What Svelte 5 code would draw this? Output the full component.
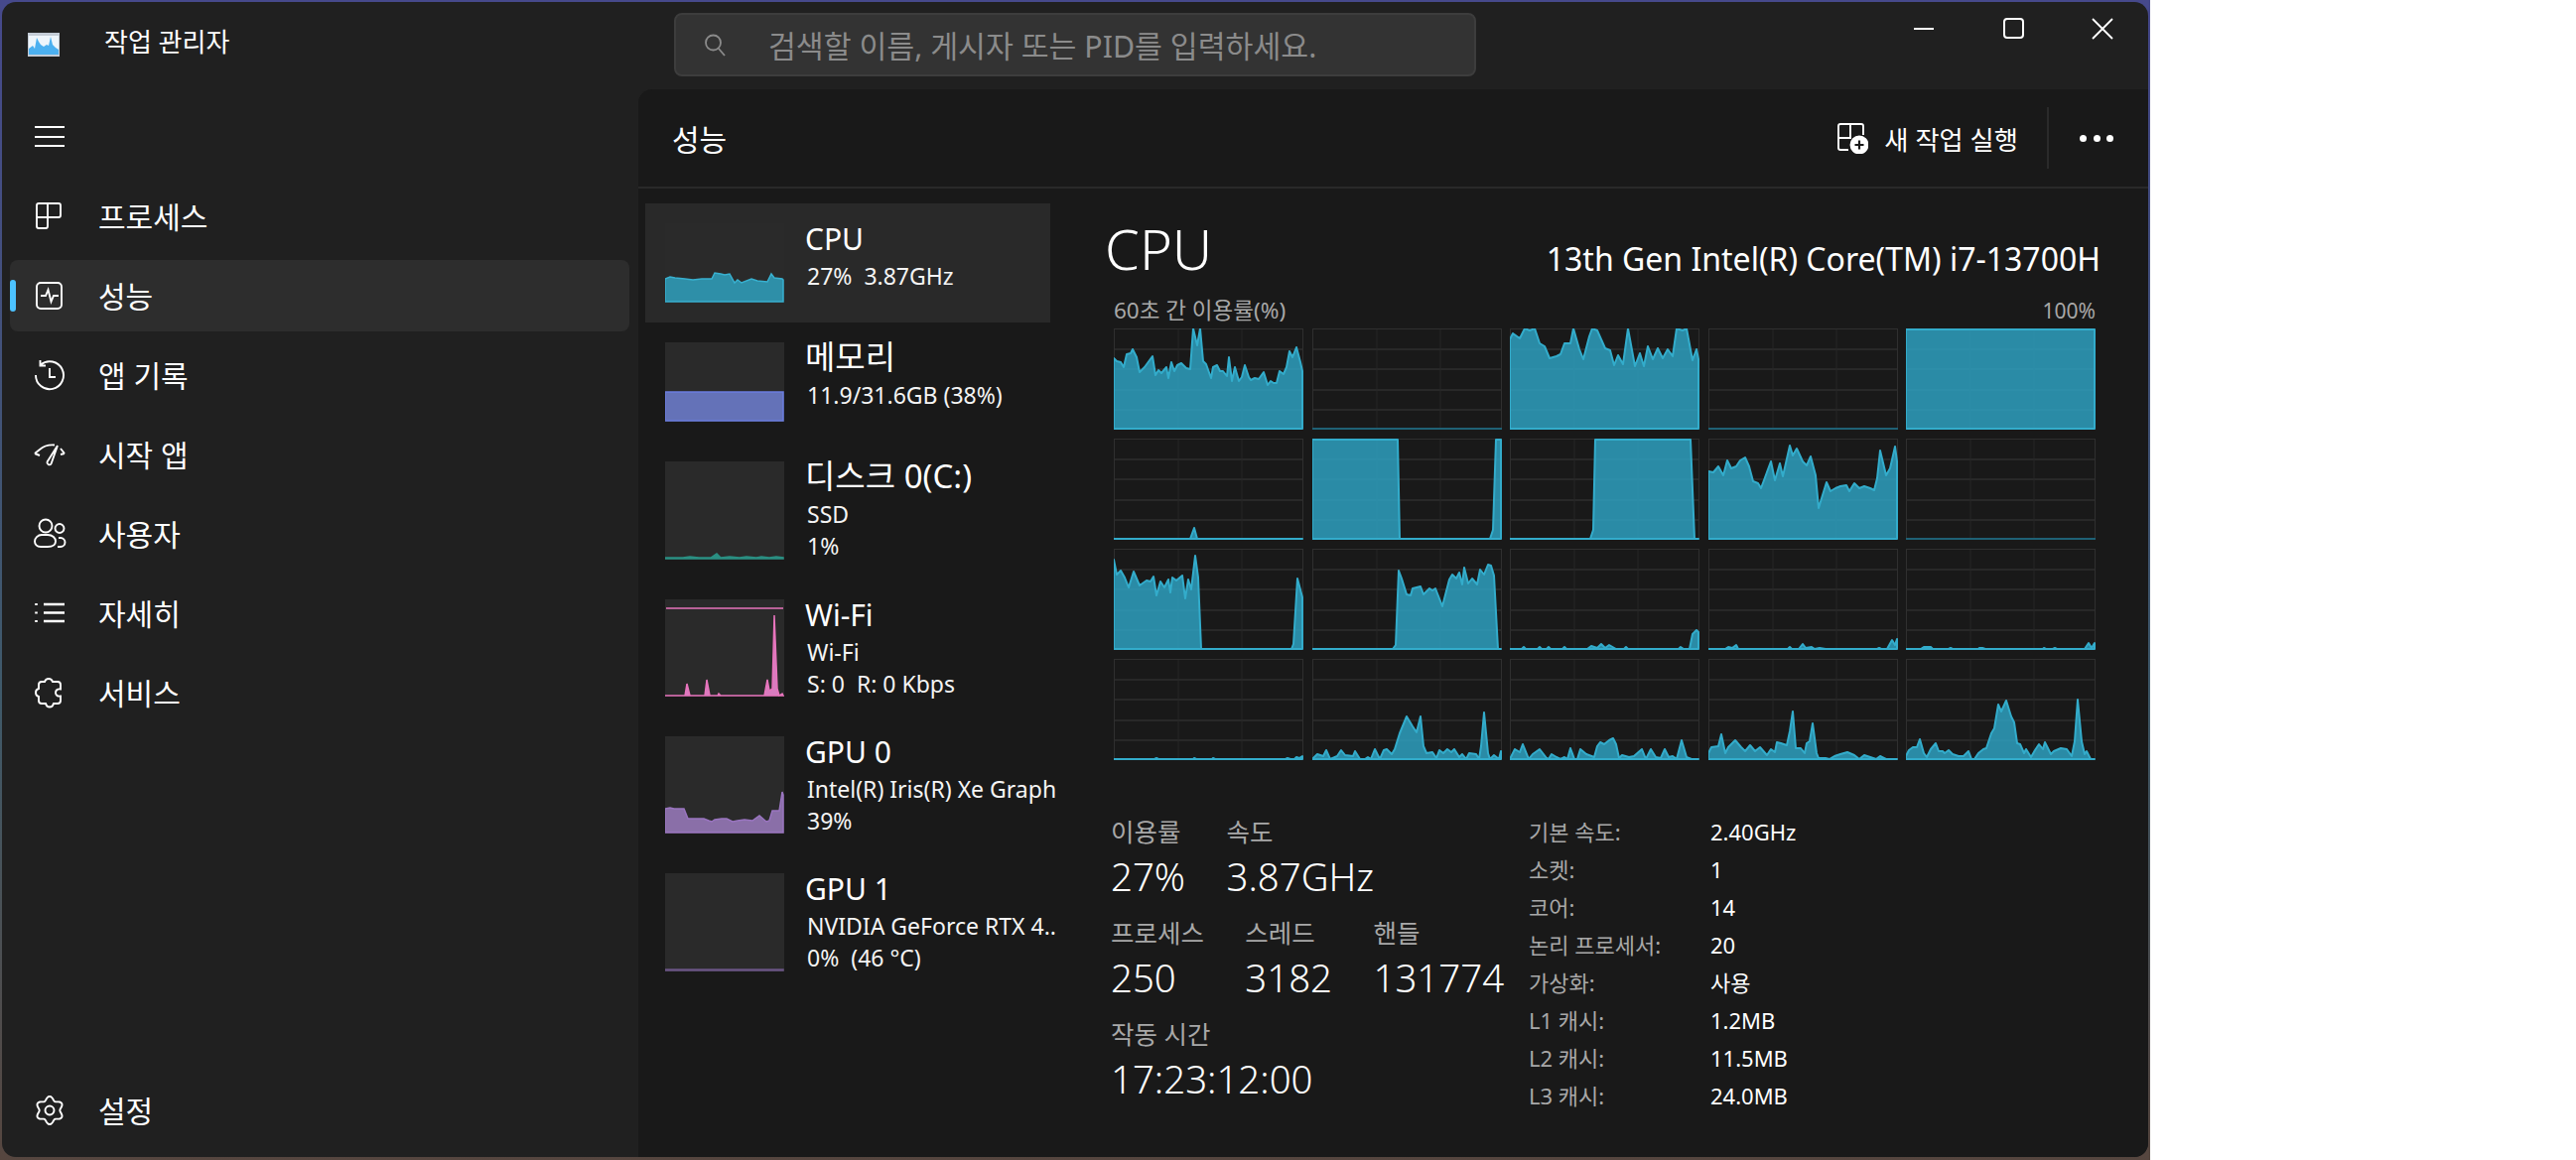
<script>
	const W = 190;
	const B = 101;

	// points are chart pixels, traced from the graph
	const cores = [
		'0,30 3,33 7,34 10,39 13,26 17,25 19,21 23,29 26,44 31,39 39,28 42,47 45,42 48,45 53,39 55,50 58,34 61,43 64,37 68,35 73,40 77,41 80,0 84,17 87,0 90,33 93,36 98,50 100,39 104,37 107,43 110,43 114,48 116,29 119,53 122,39 126,53 129,49 132,37 136,49 138,52 142,50 146,51 151,44 155,57 158,53 161,55 164,55 167,43 171,46 174,39 177,23 180,29 184,19 188,34 190,43',
		'',
		'0,11 3,5 10,10 15,0 20,2 25,0 30,15 35,18 40,30 47,28 51,26 55,15 61,15 64,0 70,21 74,31 80,8 83,0 88,2 96,20 101,22 105,37 109,27 114,36 119,0 126,38 131,25 135,38 139,18 144,31 149,20 154,30 159,21 164,28 168,0 174,2 178,0 184,32 188,21 190,31',
		'',
		'0,1 190,1',
		'0,101 77,101 81,90 84,101 190,101',
		'0,1 86,1 88,101 179,101 182,92 185,1 190,1',
		'0,101 81,101 84,92 86,1 182,1 186,101 190,101',
		'0,33 5,34 10,28 15,37 19,22 23,30 28,28 32,22 37,19 41,28 45,43 50,45 53,50 63,23 67,42 72,25 75,38 82,7 85,17 89,10 95,23 99,27 103,18 108,37 111,70 115,57 119,44 123,53 128,50 133,48 139,47 142,53 147,45 152,50 157,48 163,50 167,52 170,40 173,12 179,37 183,30 188,8 190,23',
		'',
		'0,11 3,26 7,22 11,29 15,39 20,23 26,37 33,32 37,33 40,28 43,47 47,33 51,39 55,31 57,44 59,29 63,32 69,27 72,50 75,31 78,41 82,7 85,29 88,101 179,101 181,96 185,30 190,49',
		'0,101 81,101 84,97 87,22 90,30 95,46 99,47 101,40 109,38 112,46 118,40 121,42 124,40 131,58 138,31 141,26 145,30 148,24 151,36 153,19 157,35 161,30 166,36 169,21 173,26 177,16 180,17 183,27 187,101 190,101',
		'0,101 12,101 14,99 16,101 28,101 30,99 32,101 37,101 39,99 41,101 53,101 55,99 57,101 78,101 82,98 88,100 92,96 96,100 100,97 107,101 115,101 117,99 119,101 170,101 172,99 175,101 181,101 184,86 188,82 190,84',
		'0,101 17,101 20,99 24,100 28,97 30,101 80,101 82,99 84,101 91,101 95,96 98,100 104,99 107,101 112,100 118,101 170,101 172,100 174,101 180,101 185,92 188,97 190,91',
		'0,101 15,101 18,99 25,99 27,101 43,101 45,100 47,101 73,101 74,100 77,100 80,101 138,101 139,100 141,101 148,101 150,100 152,101 180,101 184,95 187,100 190,95',
		'0,101 41,101 43,100 45,101 80,101 81,100 83,101 99,101 100,100 102,101 173,101 175,100 178,101 182,101 184,99 187,100 190,98',
		'0,101 5,96 11,98 14,92 18,101 25,98 29,92 33,97 41,98 43,93 48,101 53,101 56,99 59,101 63,91 68,101 72,92 75,91 80,96 83,91 88,75 95,58 101,68 105,74 109,58 112,88 115,95 121,94 125,100 128,92 132,95 136,91 140,94 143,91 148,99 151,96 155,101 158,95 165,96 168,101 170,88 173,54 177,95 179,101 183,97 188,101 190,93',
		'0,101 5,91 10,94 13,86 19,101 23,96 30,91 37,100 39,101 42,96 47,99 51,101 55,99 58,101 61,90 65,101 68,101 71,91 77,96 85,99 88,88 91,84 95,86 100,82 104,80 107,86 110,100 113,97 120,99 125,98 133,91 137,101 142,91 147,99 152,100 156,91 160,99 164,98 168,101 173,82 178,99 183,101 190,101',
		'0,95 3,89 10,88 13,76 17,95 20,89 27,82 33,89 37,93 42,87 47,93 52,89 59,97 63,91 67,94 69,84 73,85 79,87 82,73 85,53 88,90 93,90 97,95 99,85 102,83 105,65 109,95 111,100 118,100 122,101 127,98 133,96 140,94 147,97 152,101 157,97 163,99 169,101 173,98 179,101 190,101',
		'0,98 3,92 7,89 11,89 14,81 18,95 21,99 25,91 30,85 33,93 37,93 39,95 43,92 47,96 53,98 58,98 63,93 66,101 69,101 73,95 78,91 81,90 86,75 89,70 93,46 96,53 101,42 106,58 109,64 112,85 115,86 119,95 121,91 126,99 130,92 134,86 138,91 140,84 146,96 149,93 156,90 162,91 167,98 170,83 173,41 177,83 180,96 182,93 186,101 190,101'
	];

	const resources = [
		{ name: 'CPU', lines: ['27%  3.87GHz'], h: 80, cls: 'cpu', active: true,
			pts: '0,56 5,54 10,55 20,56 28,57 37,56 47,56 50,50 56,51 60,52 65,51 70,60 73,57 77,60 87,56 93,58 103,59 107,51 110,55 118,56 119,57' },
		{ name: '메모리', kr: true, lines: ['11.9/31.6GB (38%)'], h: 80, cls: 'mem', pts: '0,50 119,50' },
		{ name: '디스크 0(C:)', kr: true, lines: ['SSD', '1%'], h: 99, cls: 'disk',
			pts: '0,97 18,97 25,96 34,97 46,97 52,93 56,97 65,96 75,97 82,96 92,97 97,96 105,97 112,96 119,97' },
		{ name: 'Wi-Fi', lines: ['Wi-Fi', 'S: 0  R: 0 Kbps'], h: 98, cls: 'net', top: 9,
			pts: '0,97 20,97 22,85 25,97 40,97 42,81 45,97 53,97 54,95 56,97 100,97 103,81 105,92 108,90 110,16 113,90 115,97 118,95 119,97' },
		{ name: 'GPU 0', lines: ['Intel(R) Iris(R) Xe Graph', '39%'], h: 98, cls: 'gpu',
			pts: '0,73 5,72 9,73 19,73 23,83 39,83 44,85 47,86 50,84 57,83 62,83 68,86 73,85 80,84 88,85 95,80 102,86 105,85 108,75 115,75 118,56 119,59' },
		{ name: 'GPU 1', lines: ['NVIDIA GeForce RTX 4..', '0%  (46 °C)'], h: 99, cls: 'gpu idle', pts: '0,97 119,97' }
	];

	const specs = [
		['기본 속도:', '2.40GHz'], ['소켓:', '1'], ['코어:', '14'], ['논리 프로세서:', '20'],
		['가상화:', '사용'], ['L1 캐시:', '1.2MB'], ['L2 캐시:', '11.5MB'], ['L3 캐시:', '24.0MB']
	];

	function gearPath() {
		let d = '';
		for (let i = 0; i <= 72; i++) {
			const a = (i / 72) * Math.PI * 2;
			const r = 12.2 + 1.9 * Math.cos(6 * a);
			d += (i ? 'L' : 'M') + (16 + r * Math.sin(a)).toFixed(2) + ' ' + (16 - r * Math.cos(a)).toFixed(2);
		}
		return d + 'Z M16 11.5a4.5 4.5 0 1 0 0 9 4.5 4.5 0 1 0 0-9z';
	}

	const nav = [
		{ label: '프로세스', d: 'M14 3H5a2 2 0 0 0-2 2v21a2 2 0 0 0 2 2h7a2 2 0 0 0 2-2V3h11a2 2 0 0 1 2 2v10a2 2 0 0 1-2 2H3' },
		{ label: '성능', active: true, d: 'M7 3h17a4 4 0 0 1 4 4v18a4 4 0 0 1-4 4H7a4 4 0 0 1-4-4V7a4 4 0 0 1 4-4z M7 16h5l2.5-6 3 12 2.5-6h5' },
		{ label: '앱 기록', d: 'M7 5.5A14 14 0 1 1 2 16 M6.5 1v5.5H12 M16 9v9h6' },
		{ label: '시작 앱', d: 'M1 15l5-4 M1 15l5 2 M6 11C10 7.500 15 6 21 6.500 M13.500 23.500L24 7 M17.500 25.500L24 7 M13.500 23.500a2.300 2.300 0 0 0 4 2 M27 10l4 5 M31 15l-4 1' },
		{ label: '사용자', d: 'M12 1.500a6.500 6.500 0 1 0 0 13 6.500 6.500 0 1 0 0-13z M8 17h6c5 0 8 3 8 6.500S19 29 14 29H7c-4 0-6-2.500-6-5.500S4 17 8 17z M26 6a4.500 4.500 0 1 0 0 9 4.500 4.500 0 1 0 0-9z M25 20h2a4 4 0 0 1 0 9h-3' },
		{ label: '자세히', d: 'M10 7h21 M10 15.500h21 M10 24h21 M2.500 6v2 M2.500 14.500v2 M2.500 23v2', dots: true },
		{ label: '서비스', d: 'M15 2c2 0 3.500 1.500 4 3h5c2 0 3 1.500 3 3v4.500c-3-.5-5 1-5 3.500s2 4 5 3.500V24c0 1.500-1 3-3 3h-4c-.5 2-2 3.500-4 3.500s-3.500-1.500-4-3.500H8c-2 0-3-1.500-3-3v-4c-2-.5-3-2-3-4s1-3.500 3-4V8c0-1.500 1-3 3-3h3c.5-1.500 2-3 4-3z' }
	];
</script>

<style>
	:global(body) {
		background: #fff;
	}

	.desk {
		width: 2166px;
		height: 1169px;
		box-sizing: border-box;
		padding: 2px 2px 3px 2px;
		overflow: hidden;
		background: linear-gradient(180deg, #46498c 0%, #3f5a6a 60%, #56463f 100%);
		font-family: "Noto Sans", "Noto Sans CJK KR", sans-serif;
		color: #fff;
	}

	.win {
		height: 100%;
		background: #202020;
		border-radius: 14px;
		display: flex;
		flex-direction: column;
		overflow: hidden;
	}

	.titlebar {
		height: 88px;
		flex: none;
		display: flex;
		align-items: flex-start;
	}

	.app-icon {
		margin: 31px 0 0 26px;
		width: 32px;
		height: 24px;
	}

	.app-title {
		margin: 20px 0 0 45px;
		font-size: 26px;
		line-height: 40px;
		width: 130px;
		white-space: nowrap;
	}

	.search {
		margin: 11px 0 0 444px;
		width: 808px;
		height: 64px;
		box-sizing: border-box;
		background: #333;
		border: 2px solid #3d3d3d;
		border-radius: 8px;
		display: flex;
		align-items: center;
		padding-left: 27px;
		gap: 42px;
		color: #8b8b8b;
		font-size: 30.300px;
		white-space: nowrap;
	}

	.caption {
		margin-left: auto;
		margin-right: 35px;
		display: flex;
		gap: 68px;
		padding-top: 16px;
	}

	.caption svg {
		display: block;
	}

	.body {
		flex: 1;
		display: flex;
		min-height: 0;
	}

	.side {
		width: 641px;
		flex: none;
		box-sizing: border-box;
		padding: 12px 9px 11px 8px;
		display: flex;
		flex-direction: column;
		gap: 8px;
	}

	.nav-item {
		position: relative;
		height: 72px;
		flex: none;
		display: flex;
		align-items: center;
		padding-left: 24px;
		gap: 33px;
		border-radius: 8px;
		font-size: 30px;
		white-space: nowrap;
	}

	.nav-item span {
		padding-bottom: 3px;
	}

	.nav-item.active {
		background: #2d2d2d;
	}

	.nav-item.active::before {
		content: "";
		position: absolute;
		left: 0;
		top: 20px;
		width: 6px;
		height: 32px;
		border-radius: 3px;
		background: #4cc2ff;
	}

	.bottom {
		margin-top: auto;
	}

	.icon {
		width: 32px;
		height: 32px;
		flex: none;
		fill: none;
		stroke: #fff;
		stroke-width: 1.9;
		overflow: visible;
	}

	.panel {
		flex: 1;
		min-width: 0;
		background: #191919;
		border-top-left-radius: 14px;
		display: flex;
		flex-direction: column;
	}

	.panel-head {
		height: 100px;
		flex: none;
		box-sizing: border-box;
		border-bottom: 2px solid #292929;
		display: flex;
		align-items: center;
		padding: 0 35px 0 34px;
		font-size: 30px;
	}

	.run {
		margin-left: auto;
		display: flex;
		align-items: center;
		gap: 16px;
		font-size: 26.300px;
		white-space: nowrap;
	}

	.sep {
		width: 2px;
		height: 62px;
		background: #2a2a2a;
		margin: 0 31px 0 29px;
	}

	.more {
		display: flex;
		gap: 6.500px;
	}

	.more i {
		width: 7px;
		height: 7px;
		border-radius: 50%;
		background: #fff;
	}

	.page {
		flex: 1;
		display: flex;
		min-height: 0;
	}

	.list {
		width: 408px;
		flex: none;
		margin-left: 7px;
		padding-top: 15px;
	}

	.res {
		display: flex;
		padding: 20px;
		gap: 21px;
	}

	.res.active {
		background: #292929;
		height: 80px;
	}

	.thumb {
		width: 120px;
		flex: none;
		display: block;
		background: #2a2a2a;
	}

	.res-text {
		flex: 1;
		min-width: 0;
		margin-right: -26px;
		margin-bottom: -6px;
	}

	.res-name {
		font-size: 30px;
		line-height: 30px;
		padding-top: 1px;
		margin-bottom: 5.500px;
		white-space: nowrap;
	}

	.res-name.kr {
		font-size: 33px;
		padding-top: 0;
		margin-bottom: 6.500px;
	}

	.res-line {
		font-size: 23px;
		line-height: 32px;
		padding-left: 2px;
		color: #f4f4f4;
		white-space: pre;
		overflow: hidden;
	}

	.cpu { fill: #2e8fa8; stroke: #38b0cf; }
	.mem { fill: #6472b8; stroke: #6b7de0; }
	.disk { fill: #2a8f82; stroke: #2a8f82; }
	.net { fill: #d97cbf; stroke: #e874bd; }
	.gpu { fill: #8a6fa8; stroke: #9a75c0; }
	.gpu.idle { stroke: #6a5585; }

	.detail {
		margin-left: 64px;
		width: 989px;
		flex: none;
	}

	.detail-head {
		display: flex;
		justify-content: space-between;
		align-items: flex-end;
		height: 89px;
		margin-left: -9px;
		margin-right: -5px;
	}

	.big {
		font-size: 56px;
		font-weight: 300;
		line-height: 76px;
		margin-bottom: -9px;
	}

	.model {
		font-size: 32px;
		line-height: 44px;
		margin-bottom: -4px;
		white-space: nowrap;
	}

	.axis {
		display: flex;
		justify-content: space-between;
		align-items: center;
		font-size: 21px;
		line-height: 32px;
		height: 49px;
		padding-top: 13px;
		box-sizing: border-box;
		color: #a8a8a8;
		margin-top: 3px;
	}

	.axis span:first-child {
		font-size: 22.500px;
	}

	.grid {
		display: grid;
		grid-template-columns: repeat(5, 191px);
		grid-auto-rows: 102px;
		column-gap: 8.5px;
		row-gap: 9px;
	}

	.core {
		display: block;
		width: 191px;
		height: 102px;
	}

	.core .box {
		fill: none;
		stroke: #2f2f2f;
		stroke-width: 1;
	}

	.core .hl {
		stroke: #2e2e2e;
		stroke-width: 1.5;
	}

	.core .vl {
		stroke: #272727;
		stroke-width: 1;
	}

	.core .area {
		fill: rgba(46, 160, 191, 0.85);
		stroke: #33accb;
		stroke-width: 2;
		stroke-linejoin: round;
	}

	.core .flat {
		stroke: #1f6175;
		stroke-width: 2;
	}

	.stats {
		display: flex;
		padding-top: 55px;
		margin-left: -2px;
	}

	.stats-left {
		width: 420px;
		flex: none;
		display: flex;
		flex-direction: column;
		gap: 12px;
		margin-left: -1px;
	}

	.stat-row {
		display: flex;
		gap: 41.500px;
		height: 90px;
	}

	.stat-label {
		font-size: 25.500px;
		line-height: 34px;
		color: #a8a8a8;
		white-space: nowrap;
	}

	.stat-value {
		font-size: 38.400px;
		line-height: 56px;
		font-weight: 300;
		white-space: nowrap;
	}

	.specs {
		display: grid;
		grid-template-columns: 183px auto;
		grid-auto-rows: 38px;
		font-size: 22px;
		line-height: 38px;
		white-space: nowrap;
		margin: -2px 0 0 1px;
	}

	.specs .k {
		color: #a8a8a8;
	}
</style>

<div class="desk">
	<div class="win">
		<div class="titlebar">
			<svg class="app-icon" viewBox="0 0 32 24">
				<rect width="32" height="24" fill="#c4ccd6" />
				<rect x="1" y="3" width="30" height="19" fill="#eef5fb" />
				<path d="M1 22V16L5 13 7 16 9 5 11 9 13 12 16 14 19 12 21 13 23 4 25 12 28 15 31 17V22Z" fill="#4cb0f0" />
			</svg>
			<div class="app-title">작업 관리자</div>
			<div class="search">
				<svg width="24" height="24" viewBox="0 0 24 24" fill="none" stroke="#8b8b8b" stroke-width="1.800">
					<circle cx="10.500" cy="10" r="7.500" />
					<path d="M16 16l6 7" />
				</svg>
				<span>검색할 이름, 게시자 또는 PID를 입력하세요.</span>
			</div>
			<div class="caption">
				<svg width="22" height="22" viewBox="0 0 22 22" stroke="#fff" stroke-width="2" fill="none"><path d="M1 11h20" /></svg>
				<svg width="22" height="22" viewBox="0 0 22 22" stroke="#fff" stroke-width="2" fill="none"><rect x="2" y="1" width="19" height="19" rx="3" /></svg>
				<svg width="22" height="22" viewBox="0 0 22 22" stroke="#fff" stroke-width="1.800" fill="none"><path d="M1 1l20 20M21 1L1 21" /></svg>
			</div>
		</div>

		<div class="body">
			<div class="side">
				<div class="nav-item">
					<svg class="icon" viewBox="0 0 32 32"><path d="M1 6h30M1 16h30M1 25h30" /></svg>
				</div>
				{#each nav as item}
					<div class="nav-item" class:active={item.active}>
						<svg class="icon" viewBox="0 0 32 32"><path d={item.d} stroke-width={item.dots ? 2.600 : undefined} /></svg>
						<span>{item.label}</span>
					</div>
				{/each}
				<div class="nav-item bottom">
					<svg class="icon" viewBox="0 0 32 32"><path d={gearPath()} /></svg>
					<span>설정</span>
				</div>
			</div>

			<div class="panel">
				<div class="panel-head">
					<span>성능</span>
					<div class="run">
						<svg width="32" height="32" viewBox="0 0 32 32" fill="none" stroke="#fff" stroke-width="1.900">
							<path d="M14 2H4a2 2 0 0 0-2 2v22a2 2 0 0 0 2 2h8M14 2v14H2M14 2h11a2 2 0 0 1 2 2v9" />
							<circle cx="23" cy="23" r="8.500" fill="#fff" />
							<path d="M23 18.500v9M18.500 23h9" stroke="#191919" stroke-width="2.200" />
						</svg>
						<span>새 작업 실행</span>
					</div>
					<div class="sep"></div>
					<div class="more"><i></i><i></i><i></i></div>
				</div>

				<div class="page">
					<div class="list">
						{#each resources as r}
							<div class="res" class:active={r.active}>
								<svg class="thumb" style="height: {r.h}px" viewBox="0 0 120 {r.h}">
									{#if r.top}
										<path d="M1 {r.top}H119" class={r.cls} stroke-width="1.500" fill="none" />
									{/if}
									<polygon class={r.cls} stroke-width="1.500" points="0,{r.h - 1} {r.pts} 119,{r.h - 1}" />
								</svg>
								<div class="res-text">
									<div class="res-name" class:kr={r.kr}>{r.name}</div>
									{#each r.lines as line}
										<div class="res-line">{line}</div>
									{/each}
								</div>
							</div>
						{/each}
					</div>

					<div class="detail">
						<div class="detail-head">
							<div class="big">CPU</div>
							<div class="model">13th Gen Intel(R) Core(TM) i7-13700H</div>
						</div>
						<div class="axis"><span>60초 간 이용률(%)</span><span>100%</span></div>
						<div class="grid">
							{#each cores as pts}
								<svg class="core" viewBox="0 0 191 102">
									<path class="hl" d="M0 21H191M0 41H191M0 62H191M0 82H191" />
									<path class="vl" d="M65 0V102M129 0V102" />
									<rect class="box" x="0.500" y="0.500" width="190" height="101" />
									{#if pts}
										<polygon class="area" points="0,{B} {pts} {W},{B}" />
									{:else}
										<path class="flat" d="M0 101H191" />
									{/if}
								</svg>
							{/each}
						</div>
						<div class="stats">
							<div class="stats-left">
								<div class="stat-row">
									<div><div class="stat-label">이용률</div><div class="stat-value">27%</div></div>
									<div><div class="stat-label">속도</div><div class="stat-value">3.87GHz</div></div>
								</div>
								<div class="stat-row">
									<div><div class="stat-label">프로세스</div><div class="stat-value">250</div></div>
									<div><div class="stat-label">스레드</div><div class="stat-value">3182</div></div>
									<div><div class="stat-label">핸들</div><div class="stat-value">131774</div></div>
								</div>
								<div class="stat-row">
									<div><div class="stat-label">작동 시간</div><div class="stat-value">17:23:12:00</div></div>
								</div>
							</div>
							<div class="specs">
								{#each specs as [k, v]}
									<div class="k">{k}</div>
									<div>{v}</div>
								{/each}
							</div>
						</div>
					</div>
				</div>
			</div>
		</div>
	</div>
</div>
